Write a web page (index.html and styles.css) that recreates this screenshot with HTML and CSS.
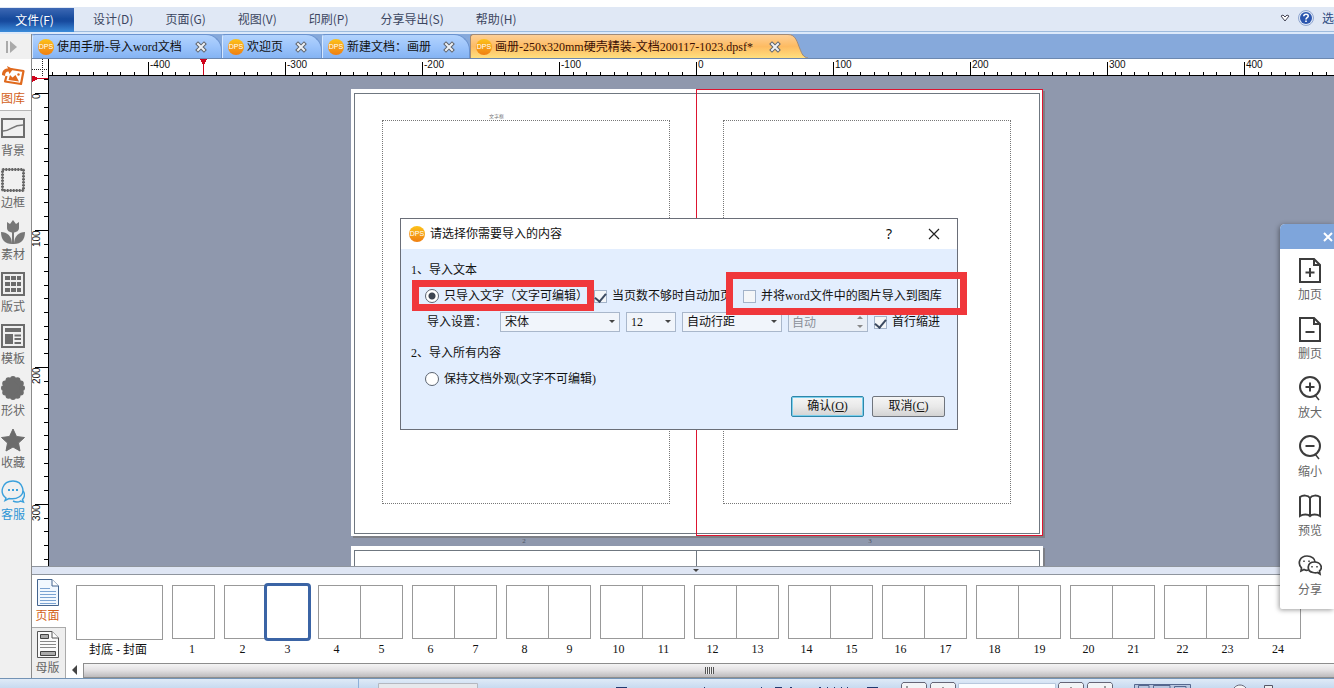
FILE: index.html
```html
<!DOCTYPE html>
<html lang="zh-CN">
  <head>
    <meta charset="UTF-8" />
    <meta name="viewport" content="width=device-width, initial-scale=1.0" />
    <title>DPS</title>
    <link rel="stylesheet" href="styles.css">
  </head>
  <body>
    <header class="menubar">
      <button class="file-btn">文件(F)</button>
      <nav class="menu">
        <a href="#">设计(D)</a>
        <a href="#">页面(G)</a>
        <a href="#">视图(V)</a>
        <a href="#">印刷(P)</a>
        <a href="#">分享导出(S)</a>
        <a href="#">帮助(H)</a>
      </nav>
      <div class="menu-right">
        <svg width="10" height="8" viewBox="0 0 10 8"><path d="M1 2 L3 1 L5 3 L7 1 L9 2 L5 7 Z" fill="#fff" stroke="#445" /></svg>
        <svg width="16" height="16" viewBox="0 0 16 16">
          <circle cx="8" cy="8" r="7.5" fill="#dfe8f6" stroke="#8fa5cf" />
          <circle cx="8" cy="8" r="6" fill="#2c56ae" />
          <path d="M5.8 6.3 C5.8 3.4 10.4 3.6 10.2 6.2 C10.1 7.7 8 7.7 8 9.4 M8 10.6 V12" fill="none" stroke="#fff" stroke-width="1.6" />
        </svg>
        <span>选</span>
      </div>
    </header>

    <div class="main">
      <aside class="sidebar">
        <button class="expand" aria-label="expand">
          <svg width="12" height="14" viewBox="0 0 12 14"><path d="M1 1 V13" stroke="#aaa" stroke-width="2" /><path d="M4 1 L11 7 L4 13 Z" fill="#aaa" /></svg>
        </button>
        <button class="tool active">
          <svg viewBox="0 0 24 24"><path d="M10 5 L22.5 7 L20 20 L4 17.5 L5.5 12" fill="none" stroke="#e06a1e" stroke-width="2.2" stroke-linejoin="round" /><path d="M1 11 C1 6 4 4.5 7 4.5 L6 2 L12 5 L8.5 10 L7.5 7.5 C5 7.5 4 9 4 12 Z" fill="#e06a1e" /><path d="M7.5 16 L9 11 L11.5 13.5 L14.5 11 L18 17.5 Z" fill="#e06a1e" /><circle cx="17.5" cy="10.5" r="1.2" fill="#e06a1e" /></svg>
          <span>图库</span>
        </button>
        <button class="tool">
          <svg viewBox="0 0 24 24"><rect x="1" y="3" width="22" height="18" fill="none" stroke="#6e6e6e" stroke-width="2" /><path d="M2 15 C10 15 11 9 22 9" fill="none" stroke="#777" stroke-width="1.6" /></svg>
          <span>背景</span>
        </button>
        <button class="tool">
          <svg viewBox="0 0 24 24"><rect x="1.5" y="1.5" width="21" height="21" fill="none" stroke="#777" stroke-width="1.6" /><rect x="1.5" y="1.5" width="21" height="21" fill="none" stroke="#666" stroke-width="3" stroke-dasharray="1.5 1.5" /></svg>
          <span>边框</span>
        </button>
        <button class="tool">
          <svg viewBox="0 0 24 24" fill="#777"><path d="M6 2 L9 4 L12 0 L15 4 L18 2 V8 C18 14 6 14 6 8 Z" /><path d="M11 11 H13 V24 H11 Z" /><path d="M0 12 C6 12 11 16 11 24 C4 24 0 20 0 12 Z" /><path d="M24 12 C18 12 13 16 13 24 C20 24 24 20 24 12 Z" /></svg>
          <span>素材</span>
        </button>
        <button class="tool">
          <svg viewBox="0 0 24 24"><path d="M0 0 H24 V24 H0 Z" fill="#6c6c6c" /><path d="M2 2 H22 V22 H2 Z" fill="#f0f0f0" /><path d="M4 4 H9 V8 H4 Z M10 4 H15 V8 H10 Z M16 4 H20 V8 H16 Z M4 10 H9 V14 H4 Z M10 10 H15 V14 H10 Z M16 10 H20 V14 H16 Z M4 16 H9 V20 H4 Z M10 16 H15 V20 H10 Z M16 16 H20 V20 H16 Z" fill="#6c6c6c" /></svg>
          <span>版式</span>
        </button>
        <button class="tool">
          <svg viewBox="0 0 24 24"><path d="M1 1 H23 V23 H1 Z" fill="#f0f0f0" stroke="#6c6c6c" stroke-width="2" /><path d="M4 4 H20 V8 H4 Z M4 10 H12 V20 H4 Z M13.5 10.5 H20 V12.5 H13.5 Z M13.5 14 H20 V16 H13.5 Z M13.5 18 H20 V20 H13.5 Z" fill="#6c6c6c" /></svg>
          <span>模板</span>
        </button>
        <button class="tool">
          <svg viewBox="0 0 24 24"><circle cx="12" cy="12" r="10" fill="#6c6c6c" /><circle cx="12" cy="12" r="9" fill="none" stroke="#6c6c6c" stroke-width="6" pathLength="12" stroke-dasharray="0 1" stroke-linecap="round" /></svg>
          <span>形状</span>
        </button>
        <button class="tool">
          <svg viewBox="0 0 24 24"><path d="M12 1 L15.5 8.5 L23.5 9.5 L17.5 15 L19 23 L12 19 L5 23 L6.5 15 L0.5 9.5 L8.5 8.5 Z" fill="#6c6c6c" stroke="#6c6c6c" stroke-linejoin="round" /></svg>
          <span>收藏</span>
        </button>
        <button class="tool service">
          <svg viewBox="0 0 24 24" fill="none" stroke="#3aa0dc" stroke-width="1.4"><path d="M5 18 C-2 13 1 1 12 1 C22 1 25 13 18 17 C15 19 11 19 8 18.5 L4 20.5 Z" /><path d="M12 21 C15 22.5 18 22 19.5 21 L22.5 22 L21.5 19.5 C24 17 24 13 22 11" /><path d="M7 10 H9 M11 10 H13 M15 10 H17" stroke-width="2" /></svg>
          <span>客服</span>
        </button>
      </aside>

      <div class="content">
        <div class="tabs">
          <div class="tab tab-1"><i class="dps">DPS</i><span>使用手册-导入word文档</span><button class="tab-close" aria-label="关闭"><svg viewBox="0 0 12 12"><use href="#close-x" /></svg></button></div>
          <div class="tab tab-2"><i class="dps">DPS</i><span>欢迎页</span><button class="tab-close" aria-label="关闭"><svg viewBox="0 0 12 12"><use href="#close-x" /></svg></button></div>
          <div class="tab tab-3"><i class="dps">DPS</i><span>新建文档：画册</span><button class="tab-close" aria-label="关闭"><svg viewBox="0 0 12 12"><use href="#close-x" /></svg></button></div>
          <div class="tab current"><i class="dps">DPS</i><span>画册-250x320mm硬壳精装-文档200117-1023.dpsf*</span><button class="tab-close" aria-label="关闭"><svg viewBox="0 0 12 12"><use href="#close-x" /></svg></button></div>
          <svg class="tab-cap" width="20" height="24" viewBox="0 0 20 24">
            <defs>
              <linearGradient id="cap-fill" x1="0" y1="0" x2="0" y2="1"><stop offset="0" stop-color="#fdcf96" /><stop offset="0.5" stop-color="#fdbb62" /><stop offset="1" stop-color="#ffdf7e" /></linearGradient>
              <g id="close-x"><path d="M3 3 L9 9 M9 3 L3 9" stroke="#5f646c" stroke-width="4" stroke-linecap="square" /><path d="M3 3 L9 9 M9 3 L3 9" stroke="#eef1f5" stroke-width="2" stroke-linecap="square" /></g>
            </defs>
            <path d="M0 0.5 C8 0.5 9 8 12 15 C14 20 15 23 20 24 L0 24 Z" fill="url(#cap-fill)" />
            <path d="M0 0.5 C8 0.5 9 8 12 15 C14 20 15 23 20 24" fill="none" stroke="#a08a78" />
          </svg>
        </div>

        <div class="ruler-row">
          <svg class="corner" width="16" height="17" viewBox="0 0 16 17"><path d="M0 10.5 H16 M10.5 0 V17" stroke="#222" stroke-dasharray="1 1" /></svg>
          <div class="ruler-h">
            <svg class="ticks" width="100%" height="17" shape-rendering="crispEdges">
              <defs><pattern id="ticks-h" x="99" y="0" width="137" height="17" patternUnits="userSpaceOnUse"><path d="M0 3 h1 v14 h-1 Z M14 13 h1 v4 h-1 Z M27 13 h1 v4 h-1 Z M41 13 h1 v4 h-1 Z M55 13 h1 v4 h-1 Z M68 13 h1 v4 h-1 Z M82 13 h1 v4 h-1 Z M96 13 h1 v4 h-1 Z M109 13 h1 v4 h-1 Z M123 13 h1 v4 h-1 Z" /></pattern></defs>
              <rect width="100%" height="17" fill="url(#ticks-h)" />
              <path d="M151 0 h7 l-3 6 v11 h-1 v-11 Z" fill="#d0021b" />
            </svg>
            <div class="labels-h"><span>-400</span><span>-300</span><span>-200</span><span>-100</span><span>0</span><span>100</span><span>200</span><span>300</span><span>400</span></div>
          </div>
        </div>

        <div class="stage">
          <div class="ruler-v">
            <svg class="ticks" width="16" height="100%" shape-rendering="crispEdges">
              <defs><pattern id="ticks-v" x="0" y="17" width="16" height="137" patternUnits="userSpaceOnUse"><path d="M3 0 v1 h13 v-1 Z M12 14 v1 h4 v-1 Z M12 27 v1 h4 v-1 Z M12 41 v1 h4 v-1 Z M12 55 v1 h4 v-1 Z M12 68 v1 h4 v-1 Z M12 82 v1 h4 v-1 Z M12 96 v1 h4 v-1 Z M12 109 v1 h4 v-1 Z M12 123 v1 h4 v-1 Z" /></pattern></defs>
              <rect width="16" height="100%" fill="url(#ticks-v)" />
              <path d="M0 -1 l6 3 h10 v1 h-10 l-6 3 Z" fill="#d0021b" />
            </svg>
            <div class="labels-v"><span>0</span><span>100</span><span>200</span><span>300</span></div>
          </div>
          <div class="canvas">
            <div class="spread">
              <div class="page left"><div class="margin-box"></div></div>
              <div class="page right selected"><div class="margin-box"></div></div>
              <span class="tiny-title">文字框</span>
            </div>
            <div class="folio"><span>2</span><span>3</span></div>
            <div class="spread next">
              <div class="page left"></div>
              <div class="page right"></div>
            </div>
          </div>
        </div>

        <div class="splitter"><i></i></div>

        <div class="pages-panel">
          <div class="side-tabs">
            <button class="side-tab on">
              <svg width="22" height="27" viewBox="0 0 22 27"><path d="M0.5 0.5 H15 L21.5 7 V26.5 H0.5 Z" fill="#f2f8ff" stroke="#45658f" /><path d="M15 0.5 V7 H21.5" fill="#fff" stroke="#45658f" /><path d="M3 9.5 H13 M3 12.5 H19 M3 15.5 H19 M3 18.5 H19 M3 21.5 H19 M3 24.5 H19" stroke="#7ba3d2" /></svg>
              <span>页面</span>
            </button>
            <button class="side-tab">
              <svg width="22" height="27" viewBox="0 0 22 27"><path d="M0.5 0.5 H15 L21.5 7 V26.5 H0.5 Z" fill="#fafafa" stroke="#555" /><path d="M15 0.5 V7 H21.5" fill="#fff" stroke="#555" /><path d="M3.5 3.5 H11.5 V7.5 H3.5 Z M3.5 20.5 H18.5 V24.5 H3.5 Z" fill="#aaa" stroke="#444" /><path d="M3 10.5 H19 M3 13.5 H19 M3 16.5 H19" stroke="#888" /></svg>
              <span>母版</span>
            </button>
          </div>
          <div class="strip">
            <div class="thumbs">
              <div class="thumb cover"><div class="sheets"><i></i></div><div class="nums"><span>封底 - 封面</span></div></div>
              <div class="thumb single"><div class="sheets"><i></i></div><div class="nums"><span>1</span></div></div>
              <div class="thumb"><div class="sheets"><i></i><i class="picked"></i></div><div class="nums"><span>2</span><span>3</span></div></div>
              <div class="thumb"><div class="sheets"><i></i><i></i></div><div class="nums"><span>4</span><span>5</span></div></div>
              <div class="thumb"><div class="sheets"><i></i><i></i></div><div class="nums"><span>6</span><span>7</span></div></div>
              <div class="thumb"><div class="sheets"><i></i><i></i></div><div class="nums"><span>8</span><span>9</span></div></div>
              <div class="thumb"><div class="sheets"><i></i><i></i></div><div class="nums"><span>10</span><span>11</span></div></div>
              <div class="thumb"><div class="sheets"><i></i><i></i></div><div class="nums"><span>12</span><span>13</span></div></div>
              <div class="thumb"><div class="sheets"><i></i><i></i></div><div class="nums"><span>14</span><span>15</span></div></div>
              <div class="thumb"><div class="sheets"><i></i><i></i></div><div class="nums"><span>16</span><span>17</span></div></div>
              <div class="thumb"><div class="sheets"><i></i><i></i></div><div class="nums"><span>18</span><span>19</span></div></div>
              <div class="thumb"><div class="sheets"><i></i><i></i></div><div class="nums"><span>20</span><span>21</span></div></div>
              <div class="thumb"><div class="sheets"><i></i><i></i></div><div class="nums"><span>22</span><span>23</span></div></div>
              <div class="thumb single"><div class="sheets"><i></i></div><div class="nums"><span>24</span></div></div>
            </div>
            <div class="scrollbar">
              <svg width="17" height="14" viewBox="0 0 17 14"><path d="M11 2 V12 L6 7 Z" fill="#444" /></svg>
              <div class="scroll-thumb"><i></i></div>
            </div>
          </div>
        </div>
      </div>
    </div>

    <footer class="statusbar">
      <svg width="1334" height="9" viewBox="0 0 1334 9">
        <path d="M358.5 0 V9" stroke="#8fb0d8" />
        <path d="M378.5 9 V4.5 H477.5 V9" fill="#e6e8ec" stroke="#b4b8c0" />
        <path d="M616 8.5 H627 M867 8.5 H878 M775 8.5 H782 M790 8.5 H792 M704 8.5 H705 M761 8.5 H762 M819 8.5 H821 M827 8.5 H828 M834 8.5 H835 M841 8.5 H842 M847 8.5 H848" stroke="#223a70" />
        <path d="M901.5 9 V5.5 L903 3.5 H925 L926.5 5.5 V9 M930.5 9 V5.5 L932 3.5 H954 L955.5 5.5 V9 M1058.5 9 V5.5 L1060 3.5 H1082 L1083.5 5.5 V9 M1087.5 9 V5.5 L1089 3.5 H1111 L1112.5 5.5 V9" fill="#f2f4f6" stroke="#667" />
        <path d="M958.5 9 V4.5 H1055.5 V9" fill="#fafcff" stroke="#b8c8dd" />
        <path d="M907 7 V9 M943 8 V9 M1071 8 V9 M1105 7 V9" stroke="#444" />
        <path d="M1134.5 9 V5.5 H1190.5 V9 M1138.5 9 V6.5 H1149 V9 M1153.5 9 V6.5 H1170 V9 M1174.5 9 V7.5 H1186 V9" fill="#b9c7e0" stroke="#56688f" />
        <path d="M1234 9 C1237 5 1243 5 1246 9" fill="#f4f4f4" stroke="#667" /><path d="M1264.5 9 V6.5 H1272.5 V9" fill="#eee" stroke="#556" />
      </svg>
    </footer>

    <!-- import dialog -->
    <form class="dialog">
      <div class="dialog-title">
        <i class="dps">DPS</i>
        <h1>请选择你需要导入的内容</h1>
        <button type="button" class="title-btn help">?</button>
        <button type="button" class="title-btn" aria-label="关闭"><svg width="12" height="12" viewBox="0 0 12 12"><path d="M1 1 L11 11 M11 1 L1 11" stroke="#222" stroke-width="1.2" /></svg></button>
      </div>
      <div class="dialog-body">
        <p class="row">1、导入文本</p>
        <div class="row options">
          <label><input type="radio" name="mode" checked>只导入文字（文字可编辑）</label>
          <label><input type="checkbox" checked>当页数不够时自动加页</label>
          <label class="pictures"><input type="checkbox">并将word文件中的图片导入到图库</label>
        </div>
        <div class="row settings">
          <span class="settings-label">导入设置：</span>
          <span class="select font"><select aria-label="字体"><option>宋体</option></select></span>
          <span class="select size"><select aria-label="字号"><option>12</option></select></span>
          <span class="select leading"><select aria-label="行距"><option>自动行距</option></select></span>
          <span class="spin"><input type="text" value="自动" aria-label="行距值" disabled></span>
          <label><input type="checkbox" checked>首行缩进</label>
        </div>
        <p class="row second">2、导入所有内容</p>
        <div class="row options">
          <label><input type="radio" name="mode">保持文档外观(文字不可编辑)</label>
        </div>
        <div class="buttons">
          <button type="button" class="primary">确认(<u>O</u>)</button>
          <button type="button">取消(<u>C</u>)</button>
        </div>
      </div>
      <div class="mark mark-text"></div>
      <div class="mark mark-pictures"></div>
    </form>

    <!-- floating tools -->
    <div class="float-panel">
      <div class="float-head"><button aria-label="关闭"><svg width="10" height="10" viewBox="0 0 10 10"><path d="M1 1 L9 9 M9 1 L1 9" stroke="#fff" stroke-width="2" /></svg></button></div>
      <button class="float-item">
        <svg viewBox="0 0 24 26"><path d="M2 1 H16 L22 7 V24 H2 Z M16 1 V7 H22 M12 10 V19 M7.5 14.5 H16.5" /></svg>
        <span>加页</span>
      </button>
      <button class="float-item">
        <svg viewBox="0 0 24 26"><path d="M2 1 H16 L22 7 V24 H2 Z M16 1 V7 H22 M7.5 15 H16.5" /></svg>
        <span>删页</span>
      </button>
      <button class="float-item">
        <svg viewBox="0 0 24 26"><circle cx="12" cy="11" r="10" /><path d="M12 6.5 V15.5 M7.5 11 H16.5" /><path d="M17 19 L21 24" stroke-width="1.5" /></svg>
        <span>放大</span>
      </button>
      <button class="float-item">
        <svg viewBox="0 0 24 26"><circle cx="12" cy="11" r="10" /><path d="M7.5 11 H16.5" /><path d="M17 19 L21 24" stroke-width="1.5" /></svg>
        <span>缩小</span>
      </button>
      <button class="float-item">
        <svg viewBox="0 0 24 26"><path d="M12 4 C10 1 5 1 2 3 V22 C5 20 10 20 12 22 C14 20 19 20 22 22 V3 C19 1 14 1 12 4 V22" /></svg>
        <span>预览</span>
      </button>
      <button class="float-item">
        <svg viewBox="0 0 24 26"><path d="M10 17 C9 17.5 7 17 6 16.5 L3 18 L3.500 15 C-1 10 2 3 9 3 C14 3 17 6 17 9" stroke-width="1.7" /><path d="M16.500 9 C9 9 8 18 15 19.500 C17 20 18.500 20 19.500 19.500 L22 21 L21.500 18 C25 15 23 9 16.500 9 Z" stroke-width="1.7" /><path d="M6 7.500 V9 M11 7.500 V9 M14 13 V14.500 M19 13 V14.500" stroke-width="1.5" /></svg>
        <span>分享</span>
      </button>
    </div>
  </body>
</html>
```
FILE: styles.css
```css
* {
  margin: 0;
  padding: 0;
  box-sizing: border-box;
}
body {
  height: 100vh;
  padding-top: 7px;
  display: flex;
  flex-direction: column;
  overflow: hidden;
  position: relative;
  background-color: #ffffff;
  color: #111111;
  font-family: "Liberation Serif", "Noto Sans CJK SC", serif;
  font-size: 12px;
  line-height: 20px;
}
button,
input,
select {
  font: inherit;
  color: inherit;
  border: none;
  background: none;
}
a {
  color: inherit;
  text-decoration: none;
}
svg {
  display: block;
  flex: none;
}
i {
  font-style: normal;
}

/* menu */
.menubar {
  height: 27px;
  flex: none;
  display: flex;
  align-items: flex-start;
  background: linear-gradient(#e0e8f5 0 24px, #9dbbdd 24px 25px, #dce9fa 25px);
  color: #3c4660;
  font-family: "Noto Sans CJK SC", sans-serif;
  line-height: 24px;
}
.file-btn {
  width: 74px;
  height: 24px;
  padding-right: 5px;
  margin-top: 1px;
  color: #ffffff;
  background: linear-gradient(#3d68b4, #164a9c 45%, #174a9e 55%, #3b8bda);
}
.menu {
  display: flex;
  gap: 32px;
  margin-left: 19px;
}
.menu-right {
  display: flex;
  align-items: center;
  gap: 8px;
  margin-left: auto;
  height: 22px;
  color: #2b4a80;
}

.main {
  flex: 1;
  min-height: 0;
  display: flex;
}

/* left toolbar */
.sidebar {
  width: 32px;
  flex: none;
  background-color: #f0f0f0;
  border-right: 1px solid #8a8a8a;
  font-family: "Noto Sans CJK SC", sans-serif;
  color: #666666;
}
.expand {
  display: flex;
  align-items: center;
  width: 31px;
  height: 25px;
  padding-left: 6px;
}
.tool {
  display: block;
  width: 31px;
  height: 52px;
  padding: 5px 0 3px 1px;
  text-align: left;
}
.tool svg {
  width: 24px;
  height: 24px;
}
.tool span {
  display: block;
  height: 20px;
}
.tool.active {
  background-color: #ffffff;
  border-bottom: 1px solid #b5b5b5;
  color: #d35f1a;
}
.tool.service {
  color: #2f97d6;
}

.content {
  flex: 1;
  min-width: 0;
  display: flex;
  flex-direction: column;
}

/* document tabs */
.tabs {
  height: 25px;
  flex: none;
  display: flex;
  background-color: #86a9db;
  border-bottom: 1px solid #6c88b0;
}
.tab {
  display: flex;
  align-items: center;
  padding-left: 5px;
  white-space: nowrap;
  border: 1px solid #6b93cf;
  border-left-color: #d6e8ff;
  border-bottom: none;
  border-radius: 3px 16px 0 0;
  background: linear-gradient(#b3d3fd, #9cc4fb 50%, #84b3f3);
}
.tab span {
  margin-left: 3px;
}
.tab-1 {
  width: 190px;
}
.tab-2 {
  width: 100px;
}
.tab-3 {
  width: 148px;
}
.tab.current {
  width: 318px;
  color: #3a1005;
  border-color: #a08a78;
  border-right: none;
  border-radius: 3px 0 0 0;
  background: linear-gradient(#fdcf96, #fdbb62 50%, #ffdf7e);
}
.tab-close {
  margin-left: auto;
  margin-right: 14px;
}
.current .tab-close {
  margin-right: 7px;
}
.tab-close svg {
  width: 12px;
  height: 12px;
}
.dps {
  width: 16px;
  height: 16px;
  flex: none;
  border-radius: 50%;
  background: linear-gradient(#fdc21a, #ef7f12);
  color: #ffffff;
  font: 7px/16px "Liberation Sans", sans-serif;
  text-align: center;
}

/* rulers */
.ruler-row {
  height: 17px;
  flex: none;
  display: flex;
  background-color: #ffffff;
}
.corner {
  border-right: 1px solid #000000;
  box-sizing: content-box;
}
.ruler-h {
  flex: 1;
  min-width: 0;
  position: relative;
  border-bottom: 1px solid #000000;
  overflow: hidden;
}
.ticks {
  position: absolute;
  inset: 0;
}
.labels-h {
  display: flex;
  margin-left: 101px;
  font: 10px/12px "Liberation Sans", sans-serif;
}
.labels-h span {
  width: 137px;
  flex: none;
}
.stage {
  flex: 1;
  min-height: 0;
  display: flex;
}
.ruler-v {
  width: 17px;
  flex: none;
  position: relative;
  background-color: #ffffff;
  border-right: 1px solid #000000;
  overflow: hidden;
}
.labels-v {
  padding-top: 17px;
  font: 10px/10px "Liberation Sans", sans-serif;
}
.labels-v span {
  display: block;
  width: 10px;
  height: 137px;
  writing-mode: vertical-rl;
  transform: rotate(180deg);
  text-align: right;
}

/* canvas */
.canvas {
  flex: 1;
  min-width: 0;
  padding: 13px 0 0 302px;
  overflow: hidden;
  background-color: #8f98ad;
}
.spread {
  position: relative;
  display: flex;
  width: 692px;
  height: 447px;
  background-color: #ffffff;
  box-shadow: 2px 2px 0 #7d7f86;
}
.page {
  width: 345px;
  padding: 4px 0 4px 3px;
}
.page.right {
  width: 347px;
  padding: 4px 3px 4px 0;
}
.page::before {
  content: "";
  display: block;
  height: 100%;
  border: 1px solid #6f7780;
  border-right: none;
}
.page.right::before {
  border: 1px solid #6f7780;
  border-left: none;
}
.page.selected {
  border: 1px solid #dd1530;
  padding: 3px 2px 3px 0;
}
.margin-box {
  position: absolute;
  top: 31px;
  bottom: 32px;
  left: 31px;
  width: 288px;
  border: 1px dotted #777777;
}
.right .margin-box {
  left: 372px;
}
.tiny-title {
  position: absolute;
  left: 138px;
  top: 25px;
  color: #777777;
  font-size: 5px;
  line-height: 6px;
}
.folio {
  display: flex;
  width: 692px;
  height: 10px;
  padding-top: 2px;
  font-size: 7px;
  line-height: 6px;
  text-align: center;
  color: #4d5565;
}
.folio span {
  flex: 1;
}
.next .page.right::before {
  border-left: 1px solid #6f7780;
}

.splitter {
  height: 9px;
  flex: none;
  display: flex;
  justify-content: center;
  align-items: center;
  padding-left: 26px;
  background-color: #dfe6f4;
  border-top: 1px solid #8f959e;
  border-bottom: 1px solid #8f959e;
}
.splitter i {
  border: 3px solid transparent;
  border-top-color: #444444;
  border-bottom: none;
}

/* pages panel */
.pages-panel {
  height: 103px;
  flex: none;
  display: flex;
}
.side-tabs {
  width: 34px;
  flex: none;
  color: #666666;
}
.side-tab {
  display: flex;
  flex-direction: column;
  align-items: center;
  width: 34px;
  height: 52px;
  padding: 3px 2px 0 0;
  background-color: #eeeeee;
  border-right: 1px solid #aaaaaa;
  border-top: 1px solid #aaaaaa;
}
.side-tab.on {
  background-color: #ffffff;
  border-color: transparent;
  color: #d35f1a;
}
.strip {
  flex: 1;
  min-width: 0;
  display: flex;
  flex-direction: column;
}
.thumbs {
  flex: 1;
  display: flex;
  gap: 9px;
  padding: 10px 0 0 10px;
  overflow: hidden;
}
.thumb {
  width: 85px;
  flex: none;
}
.sheets {
  display: flex;
  height: 54px;
  border: 1px solid #999999;
}
.sheets i {
  flex: 1;
}
.sheets i + i {
  border-left: 1px solid #999999;
}
.sheets .picked {
  border: none;
  border-radius: 1px;
  outline: 3px solid #3b64a5;
}
.cover {
  width: 87px;
}
.cover .sheets {
  height: 55px;
}
.single {
  width: 43px;
}
.nums {
  display: flex;
  padding-right: 3px;
  text-align: center;
}
.nums span {
  flex: 1;
}
.thumb:not(.cover):not(.single) .nums span:first-child {
  padding-right: 8px;
}
.scrollbar {
  display: flex;
  height: 15px;
}
.scroll-thumb {
  flex: 1;
  display: flex;
  justify-content: center;
  align-items: center;
  border: 1px solid #8d8d8d;
  border-right: none;
  background: linear-gradient(#f4f4f4, #e4e2e4 45%, #bcbabc);
}
.scroll-thumb i {
  width: 9px;
  height: 7px;
  background: repeating-linear-gradient(90deg, #555555 0 1px, #eeeeee 1px 2px);
}

.statusbar {
  height: 10px;
  flex: none;
  overflow: hidden;
  border-top: 1px solid #7393b5;
  background: linear-gradient(#dfeaf7, #c8daf0);
}

/* dialog */
.dialog {
  position: absolute;
  left: 400px;
  top: 218px;
  width: 558px;
  border: 1px solid #6a6e78;
  background-color: #e3eefe;
}
.dialog-title {
  display: flex;
  align-items: center;
  height: 30px;
  padding: 0 17px 0 8px;
  background-color: #ffffff;
}
.dialog-title h1 {
  margin-left: 5px;
  margin-right: auto;
  font-size: 12px;
  font-weight: normal;
}
.title-btn {
  width: 12px;
}
.title-btn.help {
  margin-right: 33px;
  font: 14px/20px "Noto Sans", sans-serif;
}
.dialog-body {
  padding: 11px 12px 12px 10px;
}
.row {
  height: 20px;
  margin-bottom: 6px;
  display: flex;
  align-items: center;
  white-space: nowrap;
}
.options {
  margin-left: 14px;
  gap: 6px;
}
.options .pictures {
  margin-left: 5px;
}
.dialog label {
  display: flex;
  align-items: center;
  gap: 5px;
}
.dialog input[type="radio"] {
  appearance: none;
  width: 14px;
  height: 14px;
  border: 1px solid #5c6470;
  border-radius: 50%;
  background-color: #ffffff;
}
.dialog input[type="radio"]:checked {
  background: radial-gradient(#3c4450 0 3px, #ffffff 4px);
}
.dialog input[type="checkbox"] {
  appearance: none;
  display: flex;
  justify-content: center;
  align-items: flex-start;
  width: 13px;
  height: 13px;
  border: 1px solid #a3b3c9;
  background-color: #f4f6f8;
}
.dialog input[type="checkbox"]:checked::before {
  content: "";
  width: 5px;
  height: 9px;
  border: solid #3c4a60;
  border-width: 0 2px 2px 0;
  transform: rotate(40deg);
}
.settings {
  margin-left: 16px;
  gap: 6px;
}
.settings-label {
  width: 67px;
}
.select,
.spin {
  position: relative;
  height: 20px;
}
.select select,
.spin input {
  appearance: none;
  display: block;
  width: 100%;
  height: 20px;
  padding-left: 4px;
  border: 1px solid #a9b7cb;
  background-color: #f1f5fb;
  line-height: 18px;
}
.spin input {
  padding-left: 3px;
  color: #8a8f99;
  background-color: #eaeff6;
}
.select::after,
.spin::before,
.spin::after {
  content: "";
  position: absolute;
  right: 5px;
  top: 8px;
  border: 3px solid transparent;
  border-top-color: #444444;
  border-bottom: none;
}
.spin::before {
  top: 4px;
  border-top: none;
  border-bottom: 3px solid #888888;
}
.spin::after {
  top: 13px;
  border-top-color: #888888;
}
.font {
  width: 120px;
}
.size {
  width: 50px;
}
.leading {
  width: 100px;
}
.spin {
  width: 80px;
}
.second {
  margin-top: 11px;
}
.buttons {
  display: flex;
  justify-content: flex-end;
  gap: 8px;
  padding-top: 1px;
}
.buttons button {
  width: 73px;
  height: 21px;
  border: 1px solid #70757d;
  border-radius: 2px;
  background: linear-gradient(#f5f5f5, #e9e9e9 50%, #d3d3d3);
  line-height: 19px;
}
.buttons .primary {
  border-color: #2f86a8;
  box-shadow: inset 0 0 0 1px #7cd0ee;
}
.mark {
  position: absolute;
  border: 7px solid #f0373b;
}
.mark-text {
  left: 11px;
  top: 61px;
  width: 182px;
  height: 31px;
}
.mark-pictures {
  left: 325px;
  top: 53px;
  width: 241px;
  height: 43px;
}

/* floating tools */
.float-panel {
  position: absolute;
  right: 0;
  top: 224px;
  width: 54px;
  padding-bottom: 6px;
  overflow: hidden;
  border-radius: 5px 0 0 2px;
  background-color: #ffffff;
  box-shadow: -1px 1px 5px rgba(0, 0, 0, 0.4);
  font-family: "Noto Sans CJK SC", sans-serif;
  color: #666666;
}
.float-head {
  display: flex;
  justify-content: flex-end;
  align-items: center;
  height: 25px;
  padding-right: 1px;
  background-color: #7ea5db;
}
.float-item {
  display: block;
  width: 54px;
  height: 59px;
  padding: 8px 0 4px 18px;
  text-align: left;
}
.float-item svg {
  width: 24px;
  height: 26px;
  fill: none;
  stroke: #3c3c3c;
  stroke-width: 2;
}
.float-item span {
  display: block;
  height: 20px;
}
```
